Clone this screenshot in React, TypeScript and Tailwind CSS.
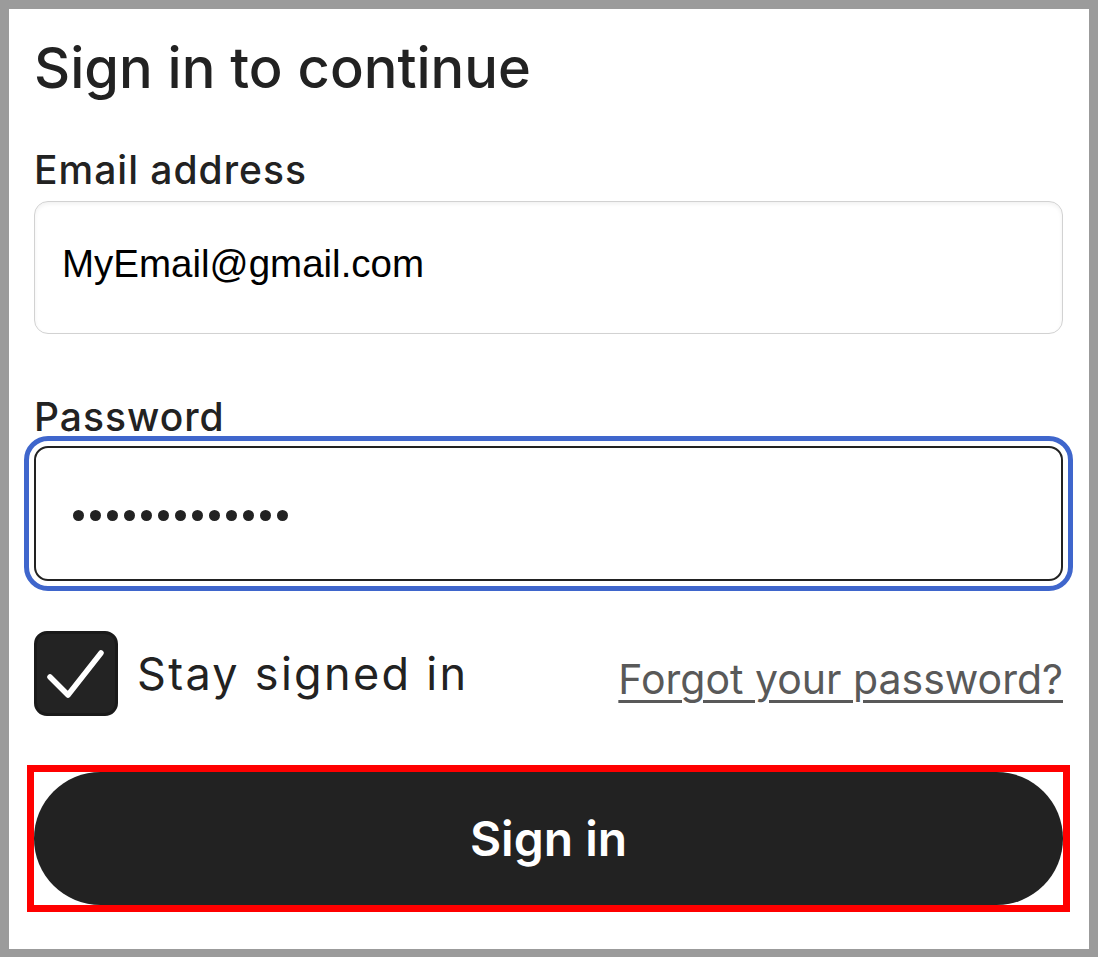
import React from "react";

export default function App() {
  const font = { fontFamily: "Inter, 'Noto Sans', sans-serif" } as React.CSSProperties;
  return (
    <div className="h-[957px] w-full bg-[#9b9b9b] pt-[9px] pl-[9px] pr-[9px] pb-[8px]">
      <div className="flex h-full flex-col bg-white pl-[25px] pr-[26px] pt-[25px]" style={font}>
        <h1 className="text-[56px] leading-[68px] font-medium text-[#222222]">Sign in to continue</h1>
        <label className="mt-[44px] text-[39px] leading-[48px] font-medium text-[#222222] tracking-[1px]">Email address</label>
        <div className="mt-[7px] flex h-[133px] items-center rounded-[14px] border border-[#d2d2d2] bg-white pl-[27px] pb-[8px] shadow-[inset_0_2px_4px_rgba(0,0,0,0.06)]">
          <span className="text-[38.5px] text-black" style={{ fontFamily: "'Liberation Sans', Arial, sans-serif" }}>MyEmail@gmail.com</span>
        </div>
        <label className="mt-[59px] text-[39px] leading-[48px] font-medium text-[#222222] tracking-[1px]">Password</label>
        <div className="mt-[5px] flex h-[135px] items-center rounded-[14px] border-2 border-[#222222] bg-white pl-[37px] outline-[5px] outline-solid outline-[#3f66cc] outline-offset-[5px]">
          <div className="flex items-center gap-[6px] pt-[4px]">
            {Array.from({ length: 13 }).map((_, i) => (
              <span key={i} className="block h-[11px] w-[11px] rounded-full bg-[#222222]" />
            ))}
          </div>
        </div>
        <div className="mt-[50px] flex items-center justify-between">
          <div className="flex items-center gap-[19px]">
            <div className="flex h-[85px] w-[84px] items-center justify-center rounded-[13px] border-[3px] border-[#1a1a1a] bg-[#232323]">
              <svg width="84" height="85" viewBox="0 0 84 85" fill="none" className="shrink-0">
                <path d="M16 46 L34 64 L67 22" stroke="white" strokeWidth="5.5" strokeLinecap="round" strokeLinejoin="round" />
              </svg>
            </div>
            <span className="text-[45px] leading-[54px] text-[#222222] tracking-[2.3px]">Stay signed in</span>
          </div>
          <a className="pt-[11px] text-[41px] leading-[52px] text-[#595959] underline decoration-[3px] underline-offset-[6px]" href="#">
            Forgot your password?
          </a>
        </div>
        <div className="-mx-[7px] mt-[49px] border-[7px] border-[#ff0000]">
          <button className="flex h-[133px] w-full items-center justify-center rounded-full bg-[#222222] text-[48px] font-semibold text-white">
            Sign in
          </button>
        </div>
      </div>
    </div>
  );
}
